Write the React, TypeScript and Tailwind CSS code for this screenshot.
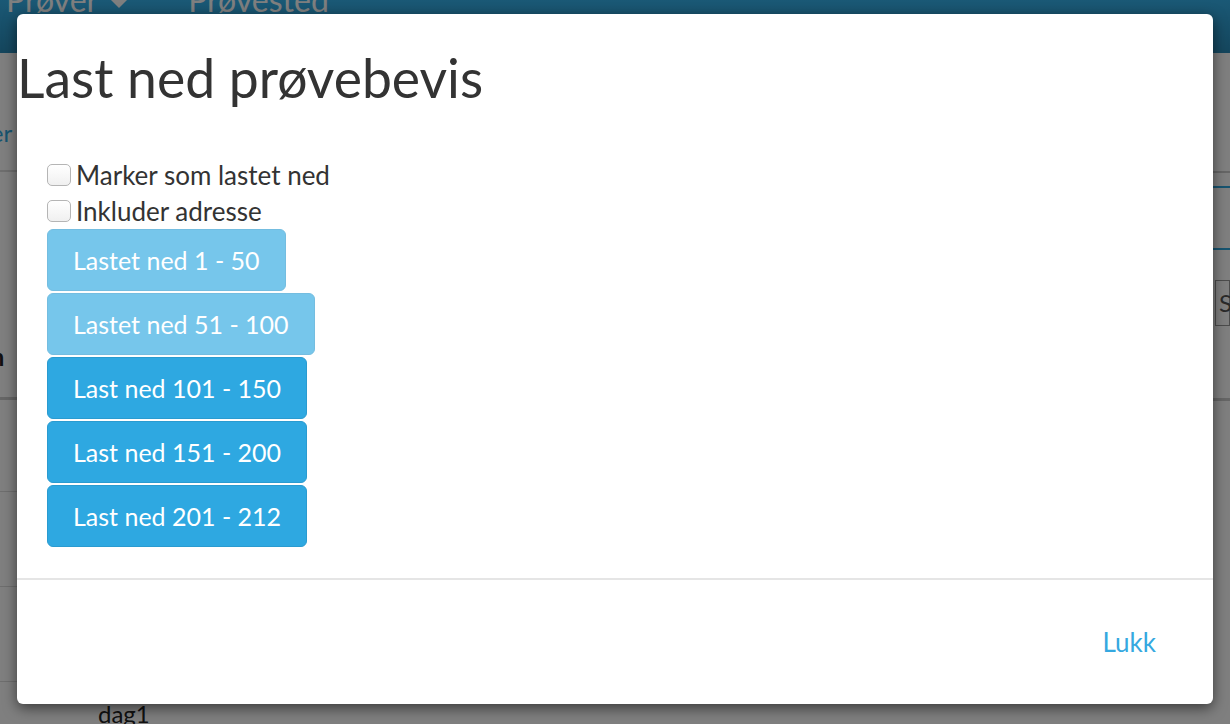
import React from "react";

const ranges = [
  { label: "Lastet ned 1 - 50", done: true },
  { label: "Lastet ned 51 - 100", done: true },
  { label: "Last ned 101 - 150", done: false },
  { label: "Last ned 151 - 200", done: false },
  { label: "Last ned 201 - 212", done: false },
];

function PageBehind() {
  return (
    <div className="h-full w-full bg-white text-[#222]">
      <nav className="h-[53px] overflow-hidden bg-gradient-to-b from-[#35b2ec] to-[#2a8cba]">
        <div className="-mt-[18px] flex text-[32px] leading-[36px] text-white">
          <span className="ml-[6px] flex items-center gap-[12px]">
            Prøver
            <span className="mt-[6px] inline-block h-0 w-0 border-x-[9px] border-t-[9px] border-x-transparent border-t-white" />
          </span>
          <span className="ml-[60px]">Prøvested</span>
        </div>
      </nav>
      <div className="flex">
        <div className="w-[600px]">
          <div className="h-[117px] pt-[62px]">
            <span className="-ml-[57px] text-[24px] text-[#2fa9e1]">Prøver</span>
          </div>
          <div className="h-[2px] bg-[#ddd]" />
          <div className="flex h-[225px] items-end pb-[22px]">
            <span className="-ml-[52px] text-[24px] font-bold">Navn</span>
          </div>
          <div className="h-[3px] bg-[#ccc]" />
          <div className="h-[92px] border-b border-[#ddd]" />
          <div className="h-[95px] border-b border-[#ddd]" />
          <div className="h-[95px] border-b border-[#ddd]" />
          <div className="pl-[98px] pt-[14px] text-[24px]">dag1</div>
        </div>
        <div className="flex-1" />
        <div className="w-[17px]">
          <div className="mt-[118px] h-[2px] bg-[#ccc]" />
          <div className="mt-[13px] h-[2px] bg-[#2fa9e1]" />
          <div className="mt-[60px] h-[2px] bg-[#2fa9e1]" />
          <div className="ml-[2px] mt-[30px] flex h-[46px] items-center border border-[#999] pl-[3px] text-[24px] text-[#555]">
            S
          </div>
          <div className="mt-[72px] h-[3px] bg-[#ccc]" />
        </div>
      </div>
    </div>
  );
}

function Checkbox({ label }: { label: string }) {
  return (
    <label className="flex h-[36px] items-center gap-[5px] text-[26px] text-[#333]">
      <input
        type="checkbox"
        className="mt-[2px] h-[22px] w-[24px] appearance-none rounded-[5px] border border-[#b5b5b5] bg-gradient-to-b from-white to-[#f0f0f0]"
      />
      <span className="pt-[2px]">{label}</span>
    </label>
  );
}

export default function App() {
  return (
    <div className="relative h-[724px] w-[1230px] overflow-hidden font-['Lato',sans-serif]">
      <PageBehind />
      <div className="absolute inset-0 bg-black/50" />
      <div className="absolute left-[17px] top-[14px] flex h-[690px] w-[1196px] flex-col rounded-md bg-white shadow-[0_4px_14px_rgba(0,0,0,0.55)]">
        <div className="h-[142px] pt-[37px]">
          <h1 className="text-[53.5px] font-normal leading-none text-[#333]">Last ned prøvebevis</h1>
        </div>
        <div className="px-[30px]">
          <Checkbox label="Marker som lastet ned" />
          <Checkbox label="Inkluder adresse" />
          <div className="mt-[1px] flex flex-col items-start gap-[2px]">
            {ranges.map((r) => (
              <button
                key={r.label}
                className={
                  "h-[62px] rounded-md border border-[#2a9bd0] bg-[#2ea8e1] px-[25px] pt-[2px] text-[25px] text-white" +
                  (r.done ? " opacity-65" : "")
                }
              >
                {r.label}
              </button>
            ))}
          </div>
        </div>
        <div className="mt-[31px] h-[2px] bg-[#e5e5e5]" />
        <div className="flex flex-1 items-center justify-end pr-[57px]">
          <button className="text-[26px] text-[#35a8e0]">Lukk</button>
        </div>
      </div>
    </div>
  );
}
